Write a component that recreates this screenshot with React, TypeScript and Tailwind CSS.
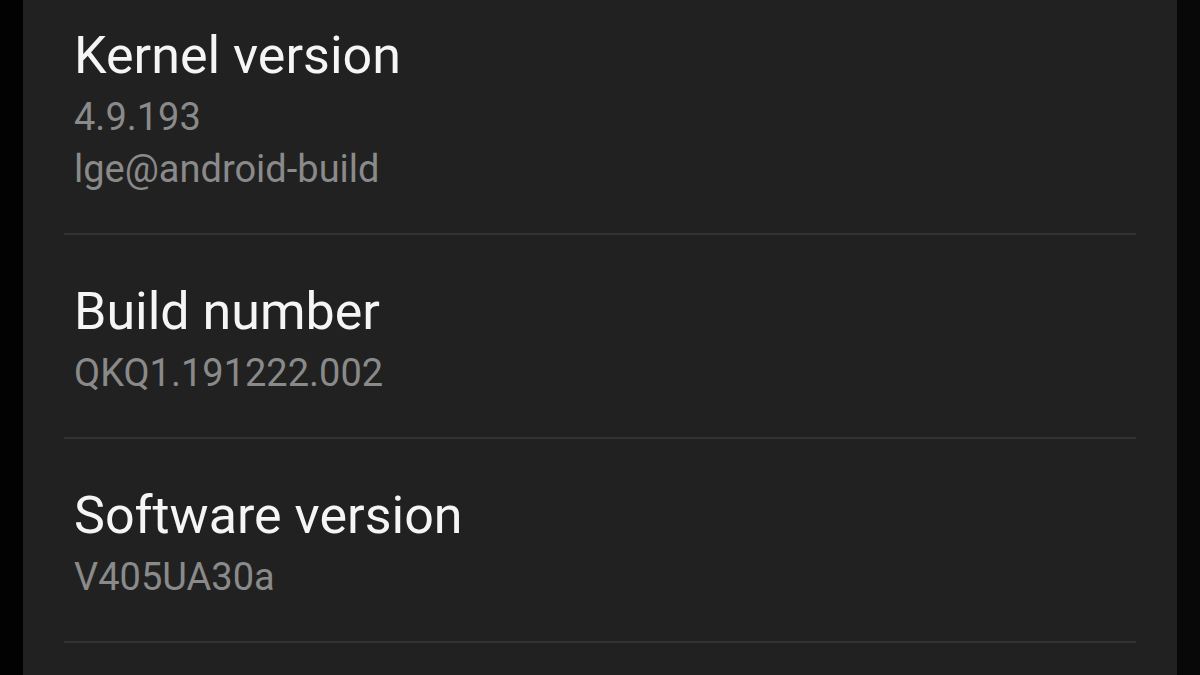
import React from "react";

type Row = { title: string; lines: string[]; pt: string };

const rows: Row[] = [
  { title: "Kernel version", lines: ["4.9.193", "lge@android-build"], pt: "pt-[26px]" },
  { title: "Build number", lines: ["QKQ1.191222.002"], pt: "pt-[47px]" },
  { title: "Software version", lines: ["V405UA30a"], pt: "pt-[47px]" },
];

export default function App() {
  return (
    <div
      className="w-[1200px] h-[675px] bg-black flex overflow-hidden"
      style={{ fontFamily: "Roboto, 'Noto Sans', sans-serif" }}
    >
      <div className="w-[23px] shrink-0 bg-[#020202]" />
      <div className="w-[1154px] shrink-0 bg-[#212121] px-[41px] flex flex-col">
        {rows.map((r) => (
          <div key={r.title} className="flex flex-col">
            <div className={`${r.pt} pb-[38px] pl-[10px]`}>
              <div className="text-[52px] leading-[60px] text-[#f5f5f5]">{r.title}</div>
              <div className="mt-[5px] text-[38px] leading-[52px] text-[#8a8a8a]">
                {r.lines.map((l) => (
                  <div key={l}>{l}</div>
                ))}
              </div>
            </div>
            <div className="h-[2px] bg-[#323232]" />
          </div>
        ))}
      </div>
      <div className="flex-1 bg-[#080808]" />
    </div>
  );
}
